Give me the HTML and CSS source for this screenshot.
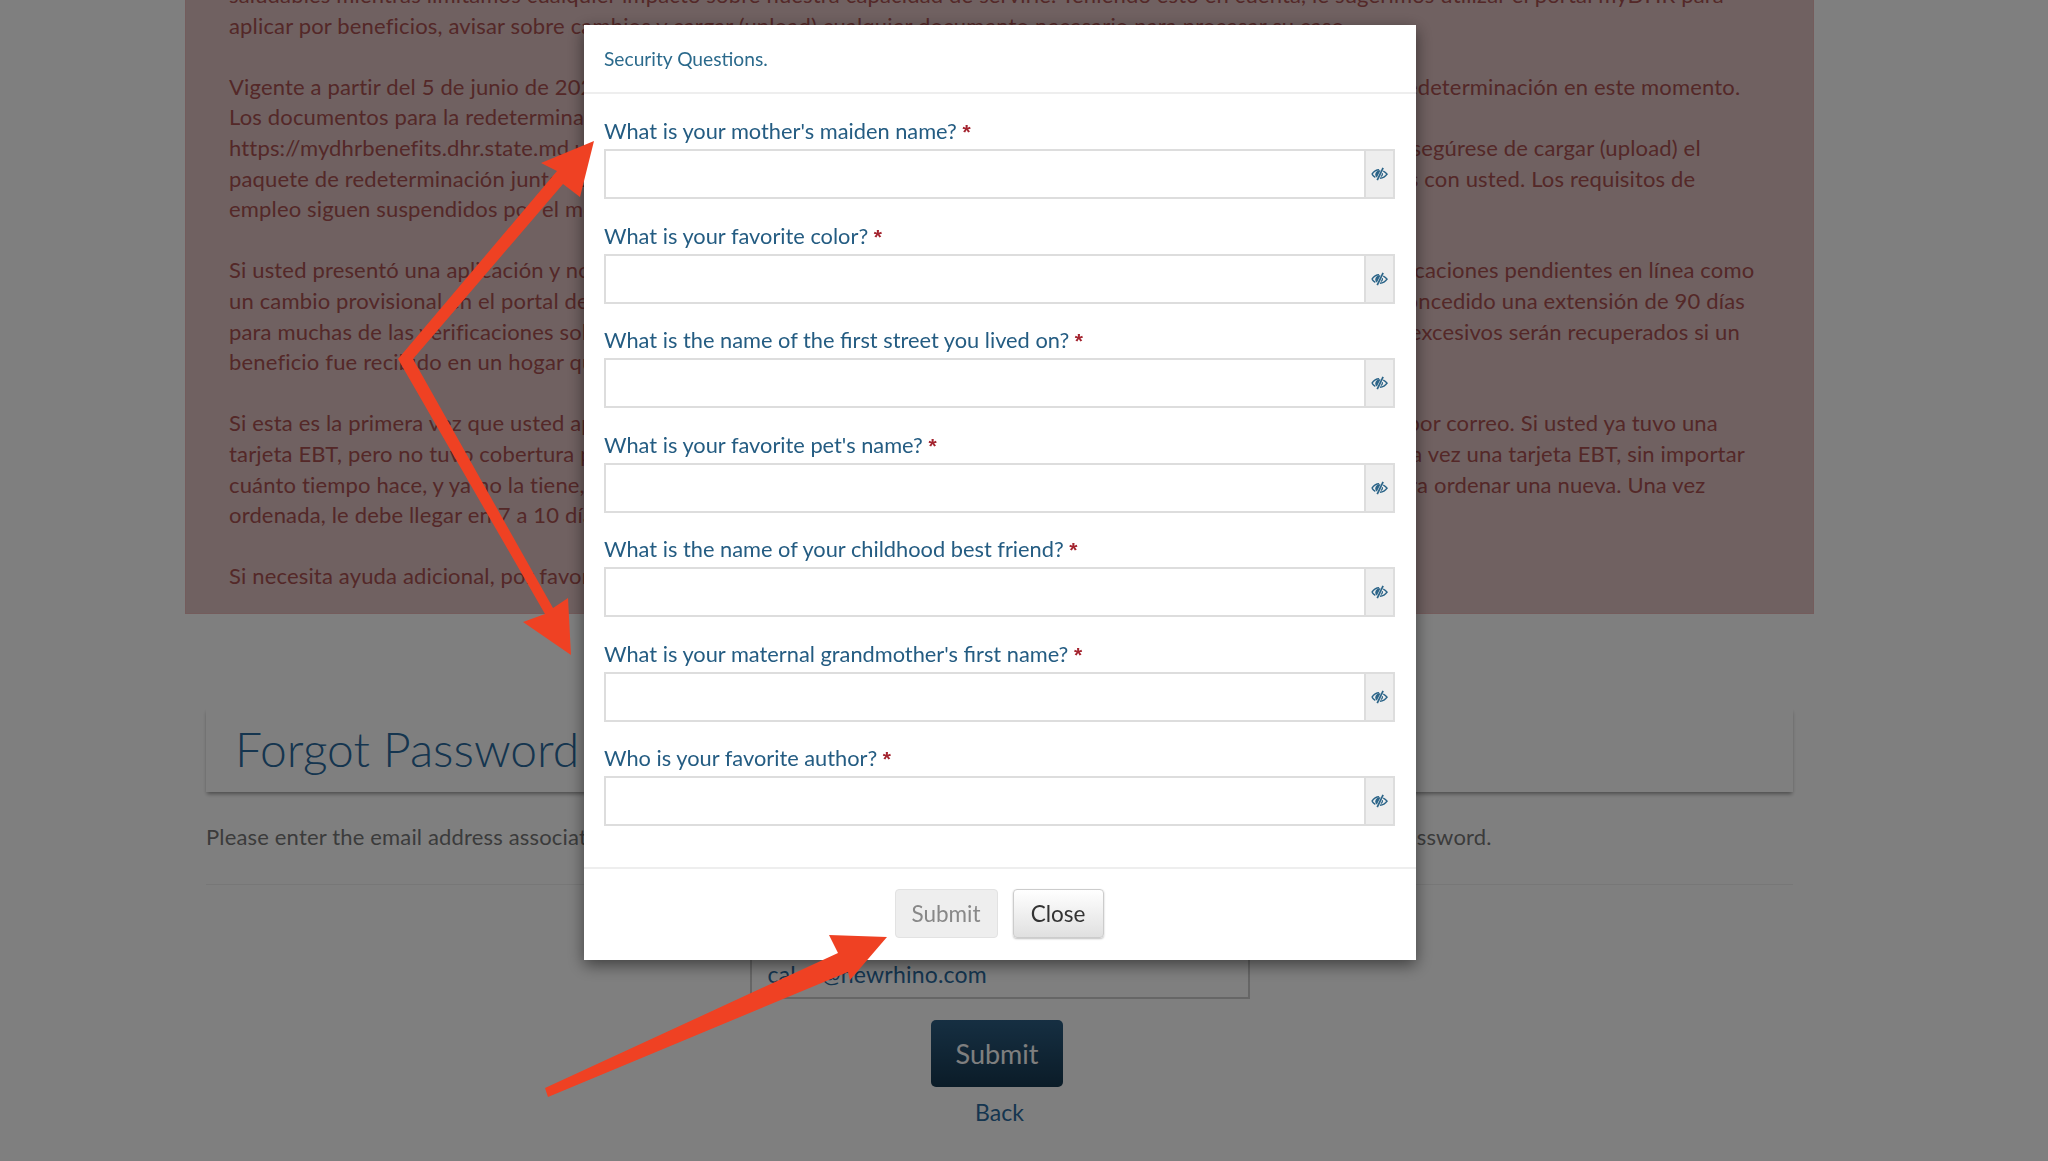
FILE: index.html
```html
<!DOCTYPE html>
<html lang="en">
<head>
    <meta charset="UTF-8">
    <title>Forgot Password</title>
    <link rel="stylesheet" href="styles.css">
</head>
<body>
    <svg class="icon-defs" width="0" height="0">
        <symbol id="eye-slash" viewBox="0 0 18 14">
            <path d="M1 7.2C3 4.2 5.6 2.6 8.6 2.5" fill="none" stroke="currentColor" stroke-width="1.6"/>
            <path d="M1 7.2C2 8.7 3.2 9.8 4.6 10.6" fill="none" stroke="currentColor" stroke-width="1.6"/>
            <path d="M10 3.2L6.2 10.6C4.9 9.6 4.3 8.4 4.5 7C4.9 4.7 7.6 2.8 10 3.2Z" fill="currentColor"/>
            <path d="M12.8 0.6L6.6 13.4" fill="none" stroke="currentColor" stroke-width="1.8"/>
            <path d="M13 4C14.6 4.9 16 6 17 7.2C15.2 9.8 12.6 11.4 9.4 11.6" fill="none" stroke="currentColor" stroke-width="1.6"/>
            <path d="M12 6.2C12.4 7.8 11.6 9 10.4 9.6" fill="none" stroke="currentColor" stroke-width="1.3"/>
        </symbol>
    </svg>

    <div class="page">
        <div class="alert">
            <div>saludables mientras limitamos cualquier impacto sobre nuestra capacidad de servirle. Teniendo esto en cuenta, le sugerimos utilizar el portal myDHR para</div>
            <div>aplicar por beneficios, avisar sobre cambios y cargar (upload) cualquier documento necesario para procesar su caso.</div>
            <br>
            <div>Vigente a partir del 5 de junio de 2020, estamos solicitando que todos estos clientes completen y envíen su paquete de redeterminación en este momento.</div>
            <div>Los documentos para la redeterminación están disponibles en línea en el portal de myDHR:</div>
            <div>https://mydhrbenefits.dhr.state.md.us. Si ya tiene una cuenta en el portal de myDHR, por favor inicie su sesión allí hoy y asegúrese de cargar (upload) el</div>
            <div>paquete de redeterminación junto con todos los documentos de verificación que tenga a mano, si tiene estos documentos con usted. Los requisitos de</div>
            <div>empleo siguen suspendidos por el momento.</div>
            <br>
            <div>Si usted presentó una aplicación y no ha recibido respuesta sobre sus casos, por favor envíe todas sus verificaciones y aplicaciones pendientes en línea como</div>
            <div>un cambio provisional en el portal de myDHR. Además, a nuestras agencias el gobierno federal de Estados Unidos le ha concedido una extensión de 90 días</div>
            <div>para muchas de las verificaciones solicitadas durante este período, pero tenga presente que todos los pagos o beneficios excesivos serán recuperados si un</div>
            <div>beneficio fue recibido en un hogar que no era elegible.</div>
            <br>
            <div>Si esta es la primera vez que usted aplica por sus beneficios, su tarjeta EBT nueva se le enviará a usted automáticamente por correo. Si usted ya tuvo una</div>
            <div>tarjeta EBT, pero no tuvo cobertura por un período muy largo, no se le enviará una tarjeta nueva. Si usted ha tenido alguna vez una tarjeta EBT, sin importar</div>
            <div>cuánto tiempo hace, y ya no la tiene, por favor llame a la línea directa de servicio al cliente de la tarjeta EBT del estado para ordenar una nueva. Una vez</div>
            <div>ordenada, le debe llegar en 7 a 10 días.</div>
            <br>
            <div>Si necesita ayuda adicional, por favor llame a su oficina local.</div>
        </div>

        <div class="forgot">
            <div class="forgot-title">
                <h1>Forgot Password</h1>
            </div>
            <p class="forgot-intro">Please enter the email address associated with your account and we will send you a secure link so that you can reset your password.</p>
            <hr class="forgot-rule">
            <div class="email-row">
                <input class="email-input" type="text" value="caleb@newrhino.com">
            </div>
            <div class="forgot-actions">
                <button class="btn-primary">Submit</button>
            </div>
            <a class="back-link" href="#">Back</a>
        </div>
    </div>

    <div class="backdrop"></div>

    <div class="modal">
        <div class="modal-header">Security Questions.</div>
        <div class="modal-body">
            <div class="question">
                <label>What is your mother's maiden name? <span class="req">*</span></label>
                <div class="input-group">
                    <input type="text">
                    <span class="addon"><svg class="eye"><use href="#eye-slash"/></svg></span>
                </div>
            </div>
            <div class="question">
                <label>What is your favorite color? <span class="req">*</span></label>
                <div class="input-group">
                    <input type="text">
                    <span class="addon"><svg class="eye"><use href="#eye-slash"/></svg></span>
                </div>
            </div>
            <div class="question">
                <label>What is the name of the first street you lived on? <span class="req">*</span></label>
                <div class="input-group">
                    <input type="text">
                    <span class="addon"><svg class="eye"><use href="#eye-slash"/></svg></span>
                </div>
            </div>
            <div class="question">
                <label>What is your favorite pet's name? <span class="req">*</span></label>
                <div class="input-group">
                    <input type="text">
                    <span class="addon"><svg class="eye"><use href="#eye-slash"/></svg></span>
                </div>
            </div>
            <div class="question">
                <label>What is the name of your childhood best friend? <span class="req">*</span></label>
                <div class="input-group">
                    <input type="text">
                    <span class="addon"><svg class="eye"><use href="#eye-slash"/></svg></span>
                </div>
            </div>
            <div class="question">
                <label>What is your maternal grandmother's first name? <span class="req">*</span></label>
                <div class="input-group">
                    <input type="text">
                    <span class="addon"><svg class="eye"><use href="#eye-slash"/></svg></span>
                </div>
            </div>
            <div class="question">
                <label>Who is your favorite author? <span class="req">*</span></label>
                <div class="input-group">
                    <input type="text">
                    <span class="addon"><svg class="eye"><use href="#eye-slash"/></svg></span>
                </div>
            </div>
        </div>
        <div class="modal-footer">
            <button class="btn btn-disabled">Submit</button>
            <button class="btn btn-close">Close</button>
        </div>
    </div>

    <!-- red arrows drawn on top of the screenshot -->
    <svg class="arrows" viewBox="0 0 2048 1161">
        <polygon points="594,141 541,163 557,171 398,359 545,614 523,622 571,655 568,598 553,608 413,359 563,184 580,197"/>
        <polygon points="545,1088 838,953 829,935 887,937 850,980 848,972 548,1097"/>
    </svg>
</body>
</html>
```

FILE: styles.css
```css
html, body {
    height: 1161px;
    overflow: hidden;
}
body {
    margin: 0;
    background: #fff;
    font-family: "Lato", "Liberation Sans", sans-serif;
    font-size: 22px;
    color: #777;
}
.icon-defs {
    position: absolute;
}
.page {
    width: 2048px;
}
.alert {
    box-sizing: border-box;
    width: 1629px;
    margin: -41px 0 0 185px;
    padding: 20px 43px 21px;
    background: #e0c2c2;
    border: 1px solid #e8b8b8;
    color: #a85050;
    line-height: 30.6px;
    letter-spacing: 0.165px;
    white-space: nowrap;
}
.forgot {
    width: 1587px;
    margin: 94px 0 0 206px;
}
.forgot-title {
    height: 84px;
    box-sizing: border-box;
    padding: 0 0 3px 29px;
    background: #fff;
    box-shadow: 0 3px 4px -1px rgba(0, 0, 0, 0.4);
    display: flex;
    align-items: center;
}
h1 {
    margin: 0;
    font-size: 48px;
    font-weight: 300;
    color: #2a6a9e;
}
.forgot-intro {
    margin: 29px 0 0;
    line-height: 32px;
    letter-spacing: 0.165px;
    color: #777;
}
.forgot-rule {
    margin: 31px 0 0;
    border: 0;
    border-top: 1px solid #eee;
}
.email-row {
    display: flex;
    justify-content: center;
    margin-top: 65px;
}
.email-input {
    box-sizing: border-box;
    width: 500px;
    height: 49px;
    padding: 0 16px;
    border: 2px solid #ccc;
    font: inherit;
    font-size: 23px;
    letter-spacing: 0.2px;
    color: #2a6a9e;
    background: #fff;
}
.forgot-actions {
    display: flex;
    justify-content: center;
    margin-top: 21px;
}
.btn-primary {
    width: 132px;
    height: 67px;
    margin-right: 5px;
    border: 0;
    border-radius: 5px;
    background: linear-gradient(#2c5e84, #163850);
    color: #fff;
    font: inherit;
    font-size: 27px;
}
.back-link {
    display: block;
    margin-top: 10px;
    text-align: center;
    font-size: 23px;
    line-height: 30px;
    color: #2a6a9e;
    text-decoration: none;
}
.backdrop {
    position: fixed;
    inset: 0;
    background: rgba(0, 0, 0, 0.5);
}
.modal {
    position: fixed;
    top: 25px;
    left: 584px;
    width: 832px;
    background: #fff;
    box-shadow: 0 5px 15px rgba(0, 0, 0, 0.5);
}
.modal-header {
    height: 67px;
    padding-left: 20px;
    border-bottom: 2px solid #eee;
    display: flex;
    align-items: center;
    font-size: 19.2px;
    color: #2b6a8c;
}
.modal-body {
    padding: 22px 21px 19px 20px;
}
.question {
    margin-bottom: 21.5px;
}
.question label {
    display: block;
    height: 32px;
    margin-bottom: 1px;
    font-size: 21.8px;
    line-height: 30.5px;
    color: #245c82;
}
.req {
    color: #a4242f;
    font-family: "Liberation Sans", sans-serif;
    font-size: 21px;
    font-weight: 700;
    line-height: 0;
}
.input-group {
    display: flex;
    height: 50px;
    box-sizing: border-box;
    border: 2px solid #ddd;
}
.input-group input {
    flex: 1;
    min-width: 0;
    border: 0;
    padding: 0;
    background: #fff;
}
.addon {
    width: 27px;
    border-left: 2px solid #ddd;
    background: #eee;
    display: flex;
    align-items: center;
    justify-content: center;
    color: #2b6488;
}
.eye {
    width: 17px;
    height: 14px;
}
.modal-footer {
    height: 93px;
    box-sizing: border-box;
    border-top: 2px solid #eee;
    display: flex;
    justify-content: center;
    padding: 20px 2px 0 0;
    gap: 15px;
}
.btn {
    height: 49px;
    border-radius: 4px;
    font: inherit;
    font-size: 22.5px;
}
.btn-disabled {
    width: 103px;
    border: 1px solid #e2e2e2;
    background: #eee;
    color: #888;
}
.btn-close {
    width: 91px;
    border: 1px solid #ccc;
    background: linear-gradient(#fff, #e0e0e0);
    color: #333;
    box-shadow: 0 1px 2px rgba(0, 0, 0, 0.25);
}
.arrows {
    position: fixed;
    inset: 0;
    width: 2048px;
    height: 1161px;
    fill: #ef4123;
}
```
